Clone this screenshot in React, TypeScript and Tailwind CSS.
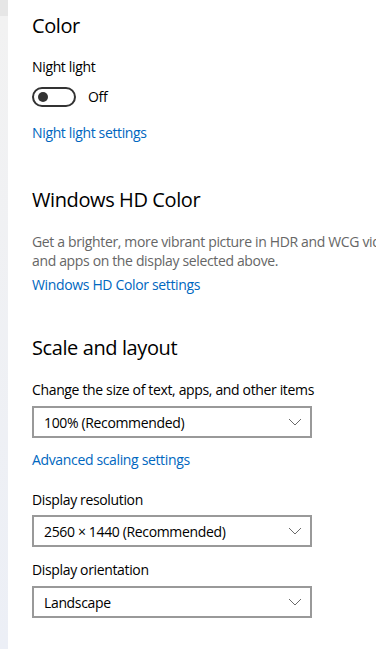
import React from "react";

const Chevron = () => (
  <svg width="14" height="8" viewBox="0 0 14 8" fill="none">
    <path d="M1 1 L7 7 L13 1" stroke="#6b6b6b" strokeWidth="1" />
  </svg>
);

const Select = ({ value }: { value: string }) => (
  <div className="flex h-[32px] w-[280px] items-center justify-between border-2 border-[#999999] pl-[10px] pr-[8px] text-[14px] text-black">
    <span>{value}</span>
    <Chevron />
  </div>
);

const Link = ({ children }: { children: React.ReactNode }) => (
  <div className="text-[14px] leading-[20px] text-[#0067c0]">{children}</div>
);

export default function App() {
  return (
    <div
      className="flex h-[649px] w-[376px] overflow-hidden bg-white text-black tracking-[-0.35px]"
      style={{ fontFamily: '"Segoe UI", "Open Sans", sans-serif' }}
    >
      <div className="flex w-[8px] shrink-0 flex-col">
        <div className="h-[16px] bg-[#e6e6e6]" />
        <div className="flex-1 bg-gradient-to-b from-[#f2f2f2] to-[#eceff6]" />
      </div>
      <div className="min-w-0 flex-1 whitespace-nowrap pl-[24px]">
        <div className="pt-[12px] text-[20px] leading-[28px] tracking-[-0.4px]">Color</div>
        <div className="mt-[17px] text-[14px] leading-[20px]">Night light</div>
        <div className="mt-[9px] flex items-center">
          <div className="flex h-[20px] w-[44px] items-center rounded-full border-2 border-[#333333] pl-[4px]">
            <div className="h-[10px] w-[10px] rounded-full bg-[#333333]" />
          </div>
          <span className="ml-[12px] text-[14px]">Off</span>
        </div>
        <div className="mt-[16px]">
          <Link>Night light settings</Link>
        </div>
        <div className="mt-[43px] text-[20px] leading-[28px] tracking-[-0.4px]">Windows HD Color</div>
        <div className="mt-[18px] text-[14px] leading-[19px] text-[#666666]">
          Get a brighter, more vibrant picture in HDR and WCG videos, games,
          <br />
          and apps on the display selected above.
        </div>
        <div className="mt-[5px]">
          <Link>Windows HD Color settings</Link>
        </div>
        <div className="mt-[39px] text-[20px] leading-[28px] tracking-[-0.4px]">Scale and layout</div>
        <div className="mt-[18px] text-[14px] leading-[20px]">
          Change the size of text, apps, and other items
        </div>
        <div className="mt-[6px]">
          <Select value="100% (Recommended)" />
        </div>
        <div className="mt-[12px]">
          <Link>Advanced scaling settings</Link>
        </div>
        <div className="mt-[20px] text-[14px] leading-[20px]">Display resolution</div>
        <div className="mt-[5px]">
          <Select value="2560 × 1440 (Recommended)" />
        </div>
        <div className="mt-[13px] text-[14px] leading-[20px]">Display orientation</div>
        <div className="mt-[6px]">
          <Select value="Landscape" />
        </div>
      </div>
    </div>
  );
}
